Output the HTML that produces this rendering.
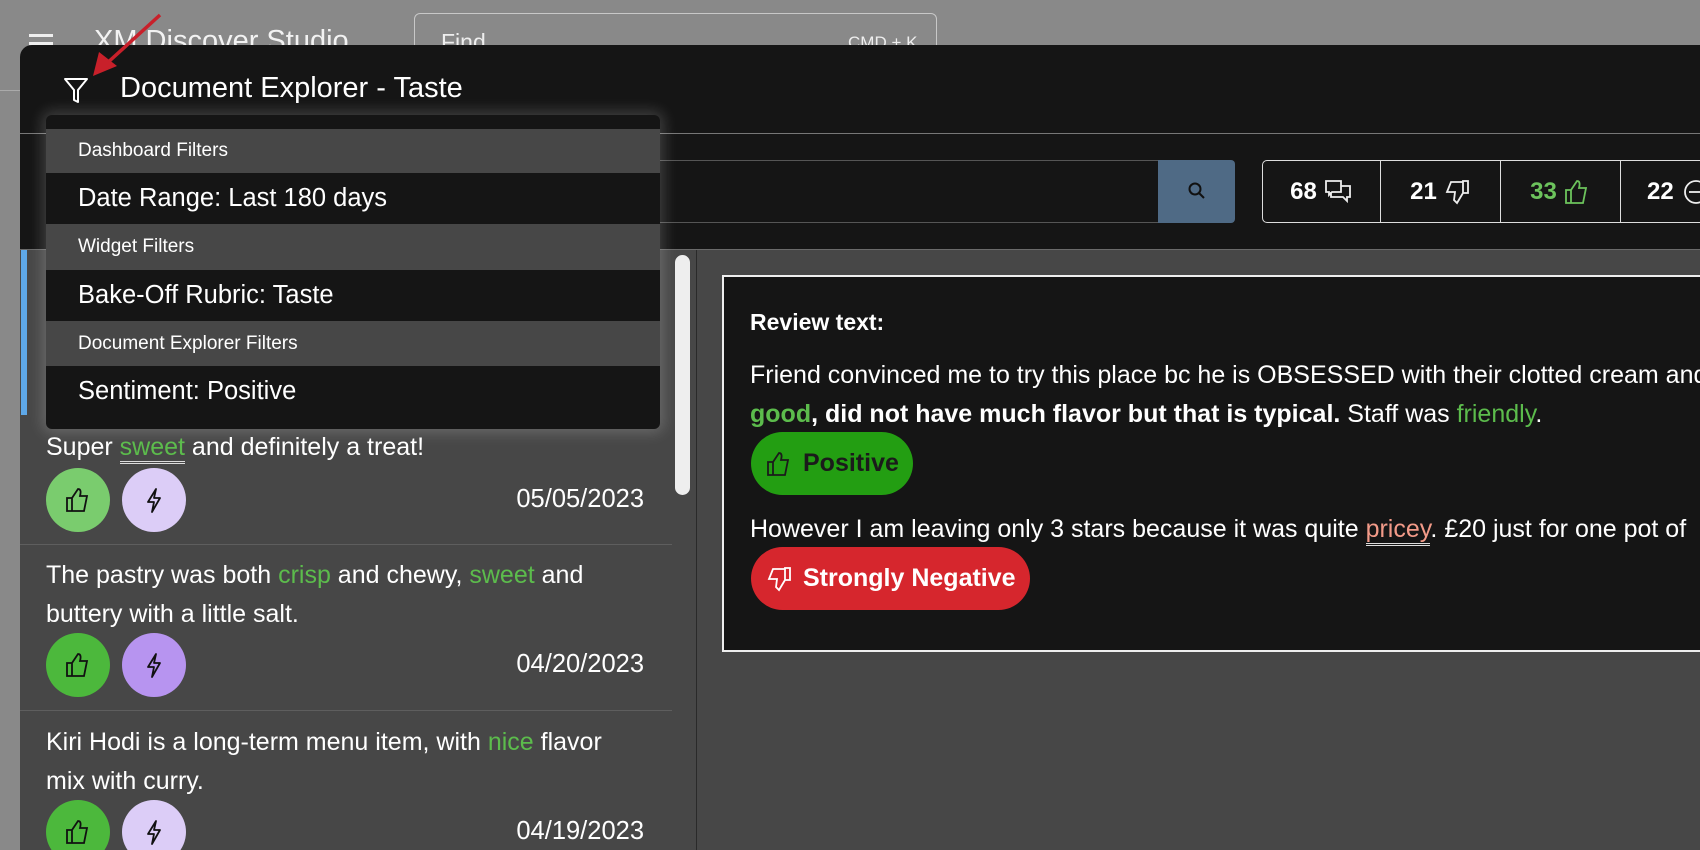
<!DOCTYPE html>
<html><head><meta charset="utf-8"><style>
*{margin:0;padding:0;box-sizing:border-box}
html,body{width:1700px;height:850px;overflow:hidden}
body{background:#898989;font-family:"Liberation Sans",sans-serif;position:relative;color:#fff}
.abs{position:absolute}
.modal{left:20px;top:45px;width:1680px;height:805px;background:#151515;border-radius:12px 0 0 0}
.hr{background:#6a6a6a;height:1px}
.panel{background:#474747}
.dd{left:46px;top:115px;width:614px;height:314px;background:#151515;border-radius:6px;box-shadow:0 0 14px 4px rgba(255,255,255,.18)}
.dd .h{position:absolute;left:0;width:614px;background:#474747;font-size:19px;padding-left:32px;display:flex;align-items:center}
.dd .i{position:absolute;left:0;width:614px;background:#151515;font-size:25.5px;padding-left:32px;display:flex;align-items:center}
.txt{font-size:25px;color:#fff;line-height:39px;white-space:nowrap}
.g{color:#5cbc4c}
.circ{position:absolute;width:64px;height:64px;border-radius:50%;display:flex;align-items:center;justify-content:center}
.date{position:absolute;font-size:25.5px;right:1056px}
.cell{position:absolute;top:160px;height:63px;border:1.5px solid #ddd;display:flex;align-items:center;justify-content:center;font-weight:bold;font-size:24px;gap:6px}
.pill{position:absolute;left:751px;height:63px;border-radius:32px;display:flex;align-items:center;padding:0 14px;gap:10px;font-weight:bold;font-size:25px}
</style></head><body>
<div class="abs" style="left:29px;top:34px;width:24px;height:3px;background:#eee;box-shadow:0 8px 0 #eee,0 16px 0 #eee"></div>
<div class="abs" style="left:94px;top:25px;font-size:29px;color:#f2f2f2">XM Discover Studio</div>
<div class="abs" style="left:414px;top:13px;width:523px;height:60px;border:1.5px solid #c8c8c8;border-radius:6px"></div>
<div class="abs" style="left:441px;top:29px;font-size:23px;color:#eee">Find</div>
<div class="abs" style="left:848px;top:33px;font-size:17px;color:#eee">CMD + K</div>
<div class="abs" style="left:0;top:90px;width:20px;height:1px;background:#aaa"></div>

<div class="abs modal"></div>
<svg class="abs" style="left:85px;top:10px" width="80" height="70"><line x1="75" y1="5" x2="20" y2="55" stroke="#c8202a" stroke-width="3.5"/><polygon points="8,66 14,42 32,56" fill="#c8202a"/></svg>
<svg class="abs" style="left:62px;top:76px" width="28" height="28" viewBox="0 0 28 28"><path d="M3 3H25L16 14V26L12 24V14Z" fill="none" stroke="#fff" stroke-width="2" stroke-linejoin="round"/></svg>
<div class="abs" style="left:120px;top:72px;font-size:29px">Document Explorer - Taste</div>
<div class="abs hr" style="left:20px;top:133px;width:1680px;background:#777"></div>

<div class="abs" style="left:600px;top:160px;width:560px;height:63px;background:#151515;border:1px solid #555;border-right:0"></div>
<div class="abs" style="left:1158px;top:160px;width:77px;height:63px;background:#4f6a85;border-radius:0 4px 4px 0"></div>
<svg class="abs" style="left:1187px;top:181px" width="20" height="20"><circle cx="8" cy="8" r="5.5" fill="none" stroke="#111" stroke-width="2"/><line x1="12" y1="12" x2="17" y2="17" stroke="#111" stroke-width="2"/></svg>
<div class="cell" style="left:1262px;width:119px;border-radius:5px 0 0 5px">68 <svg width="30" height="30" viewBox="0 0 30 30"><path d="M3 4h15v11H9l-3 3v-3H3z M8 15v5h12l4 4v-4h3V9h-9" fill="none" stroke="#eee" stroke-width="1.8"/></svg></div>
<div class="cell" style="left:1380px;width:121px">21 <svg width="28" height="28" viewBox="0 0 28 28"><path d="M20 3h5v12h-5z M20 4H8L4 14h8l-1 8 3 3 6-10" fill="none" stroke="#eee" stroke-width="1.8"/></svg></div>
<div class="cell" style="left:1500px;width:121px;color:#6cc35c">33 <svg width="28" height="28" viewBox="0 0 28 28"><path d="M3 12h5v13H3z M8 12l6-9c3 0 3 3 2 7h7l-3 15H8" fill="none" stroke="#6cc35c" stroke-width="1.8"/></svg></div>
<div class="cell" style="left:1620px;width:100px;justify-content:flex-start;padding-left:26px">22 <svg width="28" height="28"><circle cx="16" cy="14" r="11" fill="none" stroke="#eee" stroke-width="1.8"/><line x1="9" y1="14" x2="23" y2="14" stroke="#eee" stroke-width="1.8"/></svg></div>

<div class="abs hr" style="left:20px;top:249px;width:1680px"></div>
<div class="abs panel" style="left:20px;top:250px;width:676px;height:600px"></div>
<div class="abs" style="left:696px;top:250px;width:1px;height:600px;background:#2a2a2a"></div>
<div class="abs panel" style="left:697px;top:250px;width:1003px;height:600px"></div>
<div class="abs" style="left:21px;top:250px;width:6px;height:165px;background:#5ea8e8"></div>
<div class="abs" style="left:675px;top:255px;width:15px;height:240px;background:#eee;border-radius:8px"></div>

<div class="abs txt" style="left:46px;top:428px">Super <span class="g" style="border-bottom:3px double #ddd">sweet</span> and definitely a treat!</div>
<div class="circ" style="left:46px;top:468px;background:#7acc6e"><svg width="28" height="28" viewBox="0 0 28 28"><path d="M3 12h5v13H3z M8 12l6-9c3 0 3 3 2 7h7l-3 15H8" fill="none" stroke="#111" stroke-width="1.8"/></svg></div>
<div class="circ" style="left:122px;top:468px;background:#dccdf7"><svg width="24" height="28" viewBox="0 0 24 28"><path d="M14 3L6 16h6l-2 10 8-14h-6z" fill="none" stroke="#111" stroke-width="1.8" stroke-linejoin="round"/></svg></div>
<div class="date" style="top:485px">05/05/2023</div>
<div class="abs" style="left:20px;top:544px;width:652px;height:1px;background:#5e5e5e"></div>

<div class="abs txt" style="left:46px;top:556px">The pastry was both <span class="g">crisp</span> and chewy, <span class="g">sweet</span> and<br>buttery with a little salt.</div>
<div class="circ" style="left:46px;top:633px;background:#4cb83c"><svg width="28" height="28" viewBox="0 0 28 28"><path d="M3 12h5v13H3z M8 12l6-9c3 0 3 3 2 7h7l-3 15H8" fill="none" stroke="#111" stroke-width="1.8"/></svg></div>
<div class="circ" style="left:122px;top:633px;background:#b794f0"><svg width="24" height="28" viewBox="0 0 24 28"><path d="M14 3L6 16h6l-2 10 8-14h-6z" fill="none" stroke="#111" stroke-width="1.8" stroke-linejoin="round"/></svg></div>
<div class="date" style="top:650px">04/20/2023</div>
<div class="abs" style="left:20px;top:710px;width:652px;height:1px;background:#5e5e5e"></div>

<div class="abs txt" style="left:46px;top:723px">Kiri Hodi is a long-term menu item, with <span class="g">nice</span> flavor<br>mix with curry.</div>
<div class="circ" style="left:46px;top:800px;background:#4cb83c"><svg width="28" height="28" viewBox="0 0 28 28"><path d="M3 12h5v13H3z M8 12l6-9c3 0 3 3 2 7h7l-3 15H8" fill="none" stroke="#111" stroke-width="1.8"/></svg></div>
<div class="circ" style="left:122px;top:800px;background:#dccdf7"><svg width="24" height="28" viewBox="0 0 24 28"><path d="M14 3L6 16h6l-2 10 8-14h-6z" fill="none" stroke="#111" stroke-width="1.8" stroke-linejoin="round"/></svg></div>
<div class="date" style="top:817px">04/19/2023</div>

<div class="abs" style="left:722px;top:275px;width:1000px;height:377px;background:#151515;border:2.5px solid #eee"></div>
<div class="abs" style="left:750px;top:309px;font-size:23px;font-weight:bold">Review text:</div>
<div class="abs txt" style="left:750px;top:356px">Friend convinced me to try this place bc he is OBSESSED with their clotted cream and<br><span class="g" style="font-weight:bold">good</span><b>, did not have much flavor but that is typical.</b> Staff was <span class="g">friendly</span>.</div>
<div class="pill" style="top:432px;background:#239e12;color:#1b1b1b"><svg width="28" height="28" viewBox="0 0 28 28"><path d="M3 12h5v13H3z M8 12l6-9c3 0 3 3 2 7h7l-3 15H8" fill="none" stroke="#1b1b1b" stroke-width="1.8"/></svg>Positive</div>
<div class="abs txt" style="left:750px;top:510px">However I am leaving only 3 stars because it was quite <span style="color:#f29a88;border-bottom:3px double #ddd">pricey</span>. £20 just for one pot of</div>
<div class="pill" style="top:547px;background:#d6262d;color:#fff"><svg width="28" height="28" viewBox="0 0 28 28"><path d="M20 3h5v12h-5z M20 4H8L4 14h8l-1 8 3 3 6-10" fill="none" stroke="#fff" stroke-width="1.8"/></svg>Strongly Negative</div>

<div class="abs dd">
<div class="h" style="top:14px;height:44px">Dashboard Filters</div>
<div class="i" style="top:58px;height:51px">Date Range: Last 180 days</div>
<div class="h" style="top:109px;height:46px">Widget Filters</div>
<div class="i" style="top:155px;height:51px">Bake-Off Rubric: Taste</div>
<div class="h" style="top:206px;height:45px">Document Explorer Filters</div>
<div class="i" style="top:251px;height:51px">Sentiment: Positive</div>
</div>
</body></html>
